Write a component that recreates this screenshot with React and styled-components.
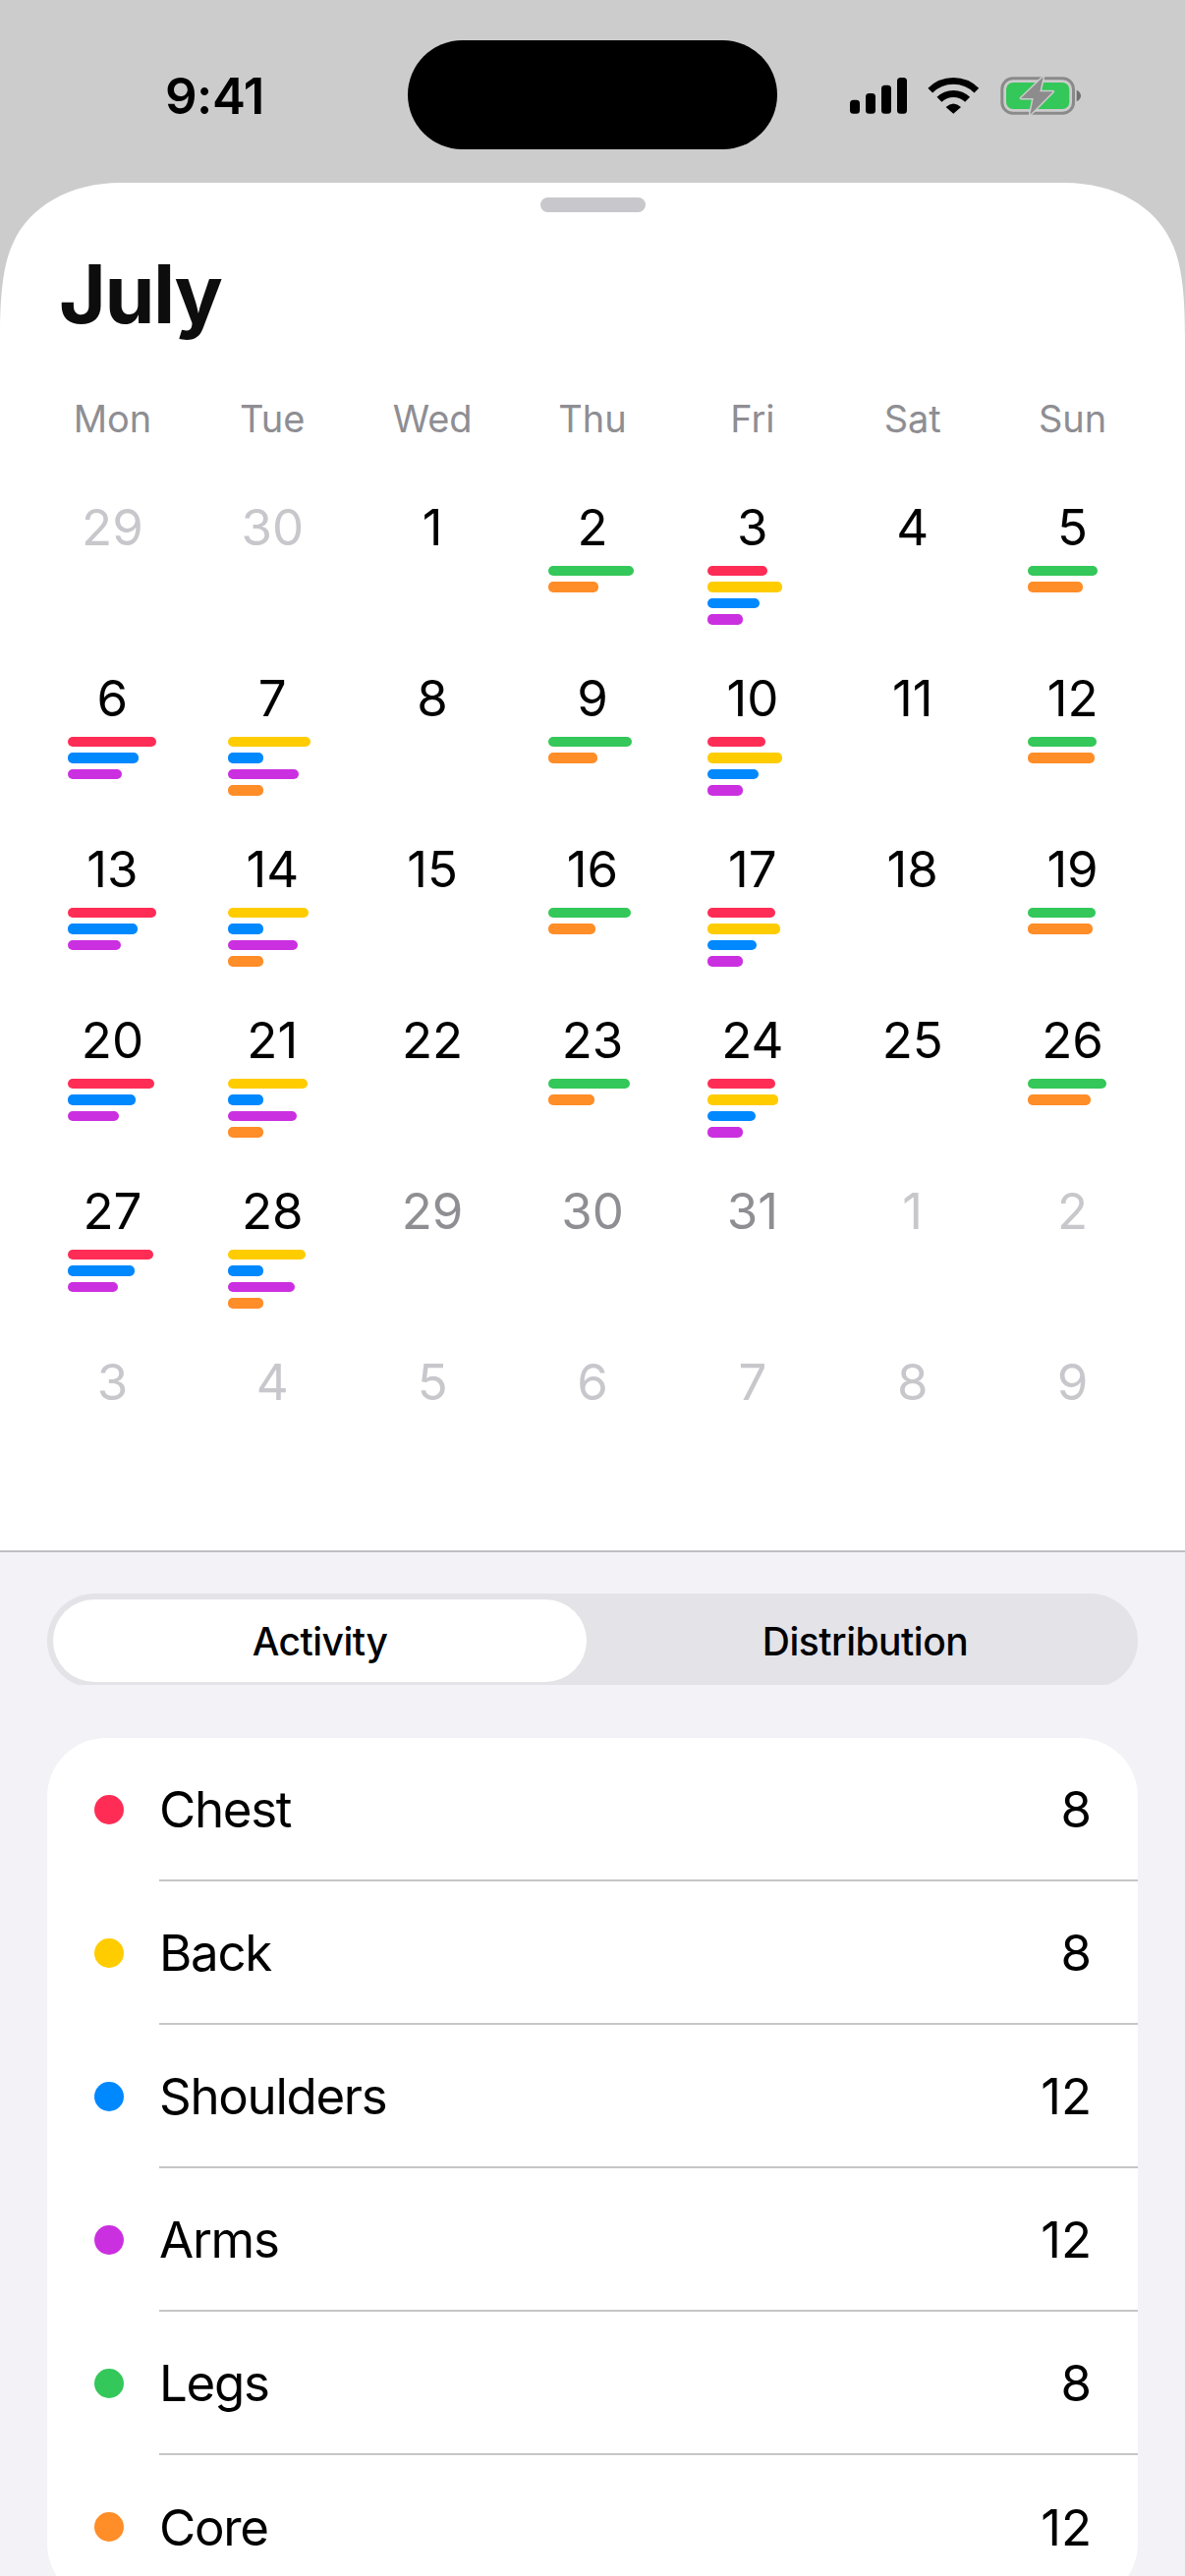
import React from 'react';
import styled, { createGlobalStyle } from 'styled-components';

const colors = {
  red: '#ff2d55',
  yellow: '#ffcc00',
  blue: '#0088ff',
  purple: '#cb30e0',
  green: '#34c759',
  orange: '#ff8d28',
};

const GlobalStyle = createGlobalStyle`
  html, body {
    margin: 0;
    padding: 0;
    background: #f2f2f7;
  }
  body {
    font-family: Inter, "Liberation Sans", sans-serif;
    color: #000;
  }
`;

const Screen = styled.div`
  width: 1206px;
  height: 2622px;
  overflow: hidden;
  background: #cccccc;
  position: relative;
`;

const StatusBar = styled.div`
  height: 186px;
  box-sizing: border-box;
  display: flex;
  align-items: flex-start;
  justify-content: space-between;
  padding: 69px 106px 0 168px;
`;

const Time = styled.div`
  font-size: 51px;
  font-weight: 600;
  line-height: 58px;
  letter-spacing: -0.5px;
`;

const Island = styled.div`
  position: absolute;
  left: 415px;
  top: 41px;
  width: 376px;
  height: 111px;
  border-radius: 56px;
  background: #000;
`;

const StatusIcons = styled.svg`
  width: 235px;
  height: 40px;
  margin-top: 9px;
  overflow: visible;
`;

// continuous corner of the sheet, rounder than a plain border-radius
const Sheet = styled.div`
  background: #fff;
  clip-path: path('M0 157C0 110 4 80 14 60C30 25 70 0 123 0L1083 0C1136 0 1176 25 1192 60C1202 80 1206 110 1206 157L1206 1394L0 1394Z');
  height: 1394px;
  box-sizing: border-box;
  padding-top: 15px;
  border-bottom: 2px solid #c0c0c4;
`;

const Handle = styled.div`
  width: 107px;
  height: 15px;
  border-radius: 8px;
  background: #c7c7cc;
  margin: 0 auto;
`;

const Month = styled.h1`
  margin: 34px 0 0 60px;
  font-size: 82px;
  line-height: 100px;
  font-weight: 700;
  letter-spacing: -1.5px;
  color: #0d0d0d;
`;

const WeekGrid = styled.div`
  display: grid;
  grid-template-columns: repeat(7, 1fr);
  padding: 0 33px;
  margin-top: 54px;
`;

const WeekDay = styled.div`
  text-align: center;
  font-size: 38px;
  line-height: 44px;
  color: #8e8e93;
`;

const DayGrid = styled.div`
  display: grid;
  grid-template-columns: repeat(7, 1fr);
  grid-auto-rows: 174px;
  padding: 0 33px;
  margin-top: 57.5px;
`;

const DayCell = styled.div`
  display: flex;
  flex-direction: column;
`;

const DayNumber = styled.div`
  text-align: center;
  font-size: 51px;
  line-height: 62px;
  color: ${(p) => p.$tone};
`;

const BarStack = styled.div`
  display: flex;
  flex-direction: column;
  gap: 6px;
  margin: 8.5px 0 0 36px;
`;

const Bar = styled.div`
  height: 10.4px;
  border-radius: 5px;
  background: ${(p) => p.$color};
`;

const Lower = styled.div`
  background: #f2f2f7;
  height: 1042px;
  box-sizing: border-box;
  padding: 42px 48px 0;
`;

// the pill is 96px tall but gets cut off at 93px in the reference
const SegmentedClip = styled.div`
  height: 93px;
  overflow: hidden;
`;

const Segmented = styled.div`
  height: 96px;
  border-radius: 48px;
  background: #e3e3e8;
  display: flex;
  gap: 6px;
  box-sizing: border-box;
  padding: 6px 0 6px 6px;
`;

const Segment = styled.div`
  flex: ${(p) => (p.$active ? '0 0 543px' : '1')};
  display: flex;
  align-items: center;
  justify-content: center;
  font-size: 39px;
  font-weight: 500;
  letter-spacing: -0.5px;
  border-radius: 42px;
  background: ${(p) => (p.$active ? '#fff' : 'transparent')};
`;

const Card = styled.div`
  margin-top: 54px;
  background: #fff;
  border-radius: 60px;
  height: 880px;
  overflow: hidden;
`;

const Row = styled.div`
  height: 146px;
  box-sizing: border-box;
  display: flex;
  align-items: center;
`;

const Dot = styled.div`
  width: 30px;
  height: 30px;
  border-radius: 50%;
  margin-left: 48px;
  background: ${(p) => p.$color};
`;

const RowBody = styled.div`
  flex: 1;
  height: 100%;
  margin-left: 36px;
  display: flex;
  align-items: center;
  justify-content: space-between;
  padding-right: 47px;
  font-size: 51px;
  border-bottom: ${(p) => (p.$last ? 'none' : '2px solid #c6c6c8')};
  box-sizing: border-box;
`;

const RowLabel = styled.span`
  letter-spacing: -1.3px;
`;

const WEEK = ['Mon', 'Tue', 'Wed', 'Thu', 'Fri', 'Sat', 'Sun'];

const LIGHT = '#c7c7cc';
const GREY = '#8e8e93';
const BLACK = '#000';

const d = (day, tone, bars) => ({ day, tone, bars });
const { red: R, yellow: Y, blue: B, purple: P, green: G, orange: O } = colors;

const DAYS = [
  d(29, LIGHT), d(30, LIGHT), d(1, BLACK),
  d(2, BLACK, [[G, 87.5], [O, 51]]),
  d(3, BLACK, [[R, 60.5], [Y, 76], [B, 52.4], [P, 35.6]]),
  d(4, BLACK),
  d(5, BLACK, [[G, 71], [O, 56]]),

  d(6, BLACK, [[R, 90], [B, 72], [P, 55]]),
  d(7, BLACK, [[Y, 84], [B, 36], [P, 72], [O, 36]]),
  d(8, BLACK),
  d(9, BLACK, [[G, 85.6], [O, 50]]),
  d(10, BLACK, [[R, 58.5], [Y, 75.4], [B, 51.7], [P, 35.6]]),
  d(11, BLACK),
  d(12, BLACK, [[G, 70], [O, 67.4]]),

  d(13, BLACK, [[R, 90], [B, 71], [P, 54]]),
  d(14, BLACK, [[Y, 82], [B, 36], [P, 71], [O, 36]]),
  d(15, BLACK),
  d(16, BLACK, [[G, 84.5], [O, 48]]),
  d(17, BLACK, [[R, 69], [Y, 74], [B, 49.4], [P, 35.6]]),
  d(18, BLACK),
  d(19, BLACK, [[G, 69], [O, 66]]),

  d(20, BLACK, [[R, 88], [B, 69], [P, 52]]),
  d(21, BLACK, [[Y, 81], [B, 36], [P, 70], [O, 36]]),
  d(22, BLACK),
  d(23, BLACK, [[G, 83.7], [O, 47]]),
  d(24, BLACK, [[R, 68.5], [Y, 72], [B, 48.6], [P, 35.6]]),
  d(25, BLACK),
  d(26, BLACK, [[G, 80], [O, 64]]),

  d(27, BLACK, [[R, 87], [B, 68], [P, 51]]),
  d(28, BLACK, [[Y, 79], [B, 36], [P, 68], [O, 36]]),
  d(29, GREY), d(30, GREY), d(31, GREY), d(1, LIGHT), d(2, LIGHT),

  d(3, LIGHT), d(4, LIGHT), d(5, LIGHT), d(6, LIGHT), d(7, LIGHT), d(8, LIGHT), d(9, LIGHT),
];

const MUSCLES = [
  ['Chest', 8, R],
  ['Back', 8, Y],
  ['Shoulders', 12, B],
  ['Arms', 12, P],
  ['Legs', 8, G],
  ['Core', 12, O],
];

const App = () => (
  <Screen>
    <GlobalStyle />
    <StatusBar>
      <Time>9:41</Time>
      <StatusIcons viewBox="0 0 235 40" fill="none">
        {/* signal */}
        <rect x="0" y="23.7" width="10" height="14" rx="3.5" fill="#000" />
        <rect x="16" y="17" width="10" height="20.7" rx="3.5" fill="#000" />
        <rect x="32" y="8.7" width="10" height="29" rx="3.5" fill="#000" />
        <rect x="48" y="1" width="10" height="36.7" rx="3.5" fill="#000" />
        {/* wifi */}
        <path d="M81.75 14.15A33.3 33.3 0 0 1 128.85 14.15" stroke="#000" strokeWidth="6.7" />
        <path d="M90.95 23.35A20.3 20.3 0 0 1 119.65 23.35" stroke="#000" strokeWidth="7" />
        <path d="M105.3 37.7L97.6 31Q105.3 24 113 31Z" fill="#000" />
        {/* battery */}
        <rect x="154.8" y="1.8" width="72.7" height="35.4" rx="11" stroke="#8a8a8a" strokeWidth="3" />
        <rect x="159" y="6" width="64.3" height="27" rx="7" fill="#34c759" />
        <path d="M230.7 13.7V25.3C233.5 24 235 22 235 19.5C235 17 233.5 15 230.7 13.7Z" fill="#707070" />
        <path
          d="M196.7 0.3L174 22H186.7L183.3 38.7L206.7 15.3H193.3Z"
          fill="#8c8c8c"
          stroke="#cccccc"
          strokeWidth="3"
          strokeLinejoin="round"
          paintOrder="stroke"
        />
      </StatusIcons>
    </StatusBar>
    <Island />
    <Sheet>
      <Handle />
      <Month>July</Month>
      <WeekGrid>
        {WEEK.map((w) => (
          <WeekDay key={w}>{w}</WeekDay>
        ))}
      </WeekGrid>
      <DayGrid>
        {DAYS.map((c, i) => (
          <DayCell key={i}>
            <DayNumber $tone={c.tone}>{c.day}</DayNumber>
            {c.bars && (
              <BarStack>
                {c.bars.map(([color, w], j) => (
                  <Bar key={j} $color={color} style={{ width: w }} />
                ))}
              </BarStack>
            )}
          </DayCell>
        ))}
      </DayGrid>
    </Sheet>
    <Lower>
      <SegmentedClip>
        <Segmented>
          <Segment $active>Activity</Segment>
          <Segment>Distribution</Segment>
        </Segmented>
      </SegmentedClip>
      <Card>
        {MUSCLES.map(([name, count, color], i) => (
          <Row key={name}>
            <Dot $color={color} />
            <RowBody $last={i === MUSCLES.length - 1}>
              <RowLabel>{name}</RowLabel>
              <span>{count}</span>
            </RowBody>
          </Row>
        ))}
      </Card>
    </Lower>
  </Screen>
);

export default App;
